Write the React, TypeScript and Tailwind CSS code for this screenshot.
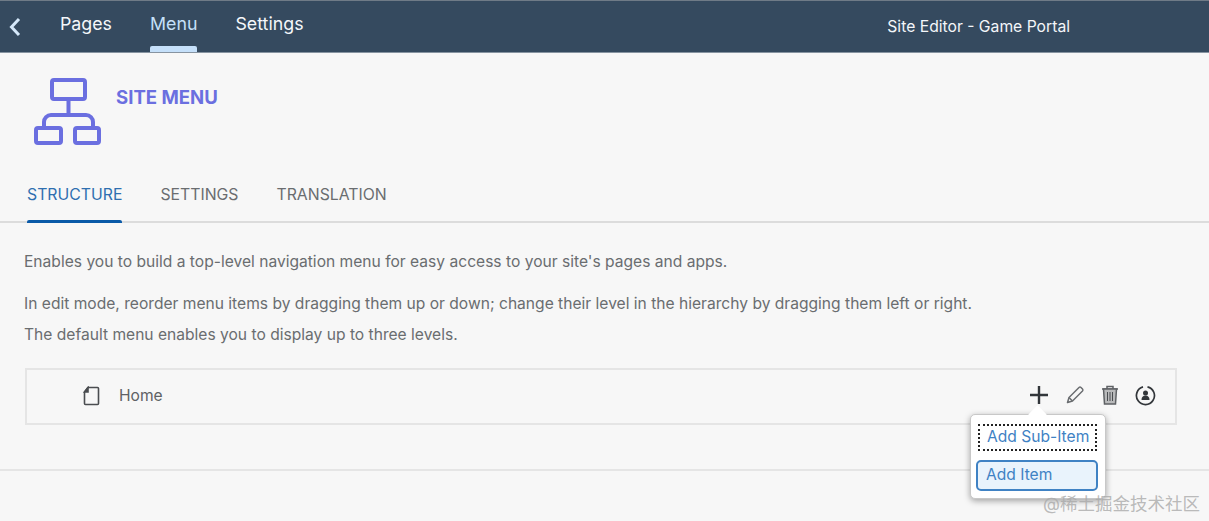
import React from "react";

const font = { fontFamily: "Inter, 'Noto Sans CJK SC', sans-serif" };

function MenuGlyph() {
  return (
    <svg width="72" height="70" viewBox="0 0 72 70" fill="none" stroke="#6b6fe0" strokeWidth="4" strokeLinejoin="round">
      <rect x="20" y="3" width="33" height="19" rx="2" />
      <path d="M36.500 22v16M12 51v-6a7 7 0 0 1 7-7h35a7 7 0 0 1 7 7v6" />
      <rect x="4" y="51" width="25" height="15" rx="2" />
      <rect x="43" y="51" width="24" height="15" rx="2" />
    </svg>
  );
}

export default function App() {
  return (
    <div className="relative w-[1209px] h-[521px] overflow-hidden bg-[#f7f7f7]" style={font}>
      <header className="h-[53px] bg-[#354a5f] border-t border-t-[#6f7b87] border-b border-b-[#8794a1] flex items-center text-[#f4f7fa]">
        <svg width="14" height="20" viewBox="0 0 14 20" fill="none" stroke="#d5e8fa" strokeWidth="3" className="ml-[8px] mt-[1px]">
          <path d="M11 2 3.500 10 11 18" />
        </svg>
        <nav className="flex h-full ml-[38px] gap-[38px] text-[17.800px]">
          <span className="pt-[10px]">Pages</span>
          <span className="pt-[10px] relative text-[#c5e0fa]">
            Menu
            <span className="absolute left-0 right-0 bottom-0 h-[6px] rounded-t-[2px] bg-[#c5e0fa]" />
          </span>
          <span className="pt-[10px]">Settings</span>
        </nav>
        <span className="ml-auto mr-[139px] text-[15.700px]">Site Editor - Game Portal</span>
      </header>

      <div className="flex pl-[32px] pt-[24px] h-[118px]">
        <MenuGlyph />
        <h1 className="ml-[12px] mt-[9px] text-[18.600px] leading-[22px] font-bold text-[#6b6fe0]">SITE MENU</h1>
      </div>

      <div className="flex h-[52px] pl-[27px] gap-[38px] border-b-2 border-[#dcdcdc] text-[15.800px] text-[#6a6d70]">
        <span className="relative pt-[12px] text-[#2f6fb0]">
          STRUCTURE
          <span className="absolute left-0 right-0 -bottom-[2px] h-[3px] rounded-t-[2px] bg-[#0a5aa8]" />
        </span>
        <span className="pt-[12px]">SETTINGS</span>
        <span className="pt-[12px]">TRANSLATION</span>
      </div>

      <div className="px-[24px] pt-[28px] text-[15.600px] text-[#6a6d70]">
        <p className="leading-[22px]">Enables you to build a top-level navigation menu for easy access to your site's pages and apps.</p>
        <p className="leading-[22px] mt-[20px]">In edit mode, reorder menu items by dragging them up or down; change their level in the hierarchy by dragging them left or right.</p>
        <p className="leading-[22px] mt-[9px]">The default menu enables you to display up to three levels.</p>

        <div className="mt-[22px] ml-[1px] h-[57px] w-[1152px] border-2 border-[#e5e5e5] flex items-center pl-[55px] pr-[19px]">
          <svg width="18" height="20" viewBox="0 0 18 20" fill="none" stroke="#4a4d50" strokeWidth="1.600" className="-mt-[1px]">
            <path d="M6 1.500h9.500a1 1 0 0 1 1 1v15a1 1 0 0 1-1 1h-12a1 1 0 0 1-1-1V6z" strokeLinejoin="round" />
            <path d="M6 1.500V6H2.500z" fill="#4a4d50" />
          </svg>
          <span className="ml-[19px] -mt-[1px] text-[#5f6265]">Home</span>
          <div className="ml-auto -mt-[3px] flex items-center gap-[16px]">
            <svg width="20" height="20" viewBox="0 0 20 20" stroke="#32363a" strokeWidth="2.400">
              <path d="M10 1v18M1 10h18" />
            </svg>
            <svg width="20" height="20" viewBox="0 0 20 20" fill="none" stroke="#6a6d70" strokeWidth="1.500" strokeLinejoin="round">
              <path d="M2.500 17.500 4 12.500 14 2.500a1.500 1.500 0 0 1 2 0l1.500 1.500a1.500 1.500 0 0 1 0 2l-10 10z" />
              <path d="M4 12.500 7.500 16" />
            </svg>
            <svg width="18" height="20" viewBox="0 0 18 20" fill="none" stroke="#5f6265" strokeWidth="1.500">
              <path d="M1 4h16M6 4V1.500h6V4" />
              <path d="M2.500 4h13l-1 15h-11z" fill="#b9babb" />
              <path d="M6.500 7v9M9 7v9M11.500 7v9" stroke="#4a4d50" strokeWidth="1" />
            </svg>
            <svg width="21" height="21" viewBox="0 0 21 21" fill="none" stroke="#32363a" strokeWidth="1.700">
              <path d="M12.500 1.800A9 9 0 1 1 8 1.900" />
              <circle cx="10.500" cy="8" r="2.500" fill="#32363a" stroke="none" />
              <path d="M6.500 15c0-3 1.500-4.500 4-4.500s4 1.500 4 4.500z" fill="#32363a" stroke="none" />
            </svg>
          </div>
        </div>
      </div>

      <div className="mt-[44px] border-t-2 border-[#e5e5e5]" />

      <div className="absolute left-[970px] top-[414px] w-[136px] h-[85px] bg-white rounded-[5px] border border-[#c8c8c8] shadow-[0_2px_6px_rgba(0,0,0,0.35)] text-[15.600px] text-[#3f82c4]">
        <span className="absolute left-[60px] -top-[7px] w-[13px] h-[13px] rotate-45 bg-white" />
        <div className="absolute left-[7px] top-[9px] w-[119px] h-[27px] border-2 border-dotted border-[#222] pl-[7px] leading-[22px]">Add Sub-Item</div>
        <div className="absolute left-[5px] top-[45px] w-[122px] h-[31px] rounded-[5px] border-2 border-[#3f82c4] bg-[#e9f3fc] pl-[8px] leading-[26px]">Add Item</div>
      </div>

      <span className="absolute left-[1043px] top-[494px] text-[17.500px] leading-[20px] text-[#a9a9a9]/80 whitespace-nowrap">@稀土掘金技术社区</span>
    </div>
  );
}
